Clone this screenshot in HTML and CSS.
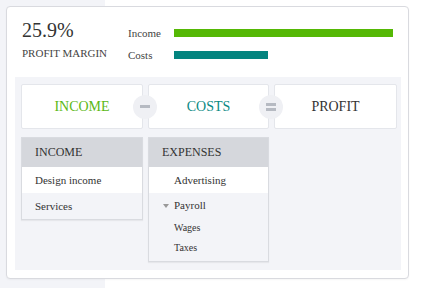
FILE: index.html
```html
<!DOCTYPE html>
<html lang="en">

<head>
    <meta charset="UTF-8">
    <meta name="viewport" content="width=device-width, initial-scale=1.0">
    <title>Profit</title>
    <link rel="stylesheet" href="styles.css">
</head>

<body>
    <div class="card">
        <div class="summary">
            <div class="margin">
                <div class="margin__value">25.9%</div>
                <div class="margin__label">PROFIT MARGIN</div>
            </div>
            <div class="bars">
                <div class="bars__row">
                    <span class="bars__label">Income</span>
                    <div class="bars__track"><div class="bars__fill bars__fill--income" style="width: 100%"></div></div>
                </div>
                <div class="bars__row">
                    <span class="bars__label">Costs</span>
                    <div class="bars__track"><div class="bars__fill bars__fill--costs" style="width: 43%"></div></div>
                </div>
            </div>
        </div>
        <div class="panel">
            <div class="equation">
                <div class="equation__box equation__box--income">INCOME</div>
                <div class="equation__op"><span class="bar"></span></div>
                <div class="equation__box equation__box--costs">COSTS</div>
                <div class="equation__op"><span class="bar"></span><span class="bar"></span></div>
                <div class="equation__box equation__box--profit">PROFIT</div>
            </div>
            <div class="lists">
                <div class="list">
                    <div class="list__head">INCOME</div>
                    <div class="list__row list__row--white">Design income</div>
                    <div class="list__row">Services</div>
                </div>
                <div class="list list--expenses">
                    <div class="list__head">EXPENSES</div>
                    <div class="list__row list__row--white list__row--indent">Advertising</div>
                    <div class="list__row list__row--group"><span class="caret"></span>Payroll</div>
                    <div class="list__row list__row--sub">Wages</div>
                    <div class="list__row list__row--sub">Taxes</div>
                </div>
            </div>
        </div>
    </div>
</body>

</html>
```

FILE: styles.css
```css
body {
    margin: 0;
    height: 288px;
    background: linear-gradient(to right, #f3f4f8 105px, #fff 105px);
    font-family: "Liberation Serif", Tinos, "DejaVu Serif", serif;
    color: #333;
}

.card {
    box-sizing: border-box;
    width: 403px;
    height: 273px;
    margin: 6px 0 0 6px;
    padding: 0 7px 8px 8px;
    background-color: #fff;
    border: 1px solid #d9dadf;
    border-radius: 4px;
    box-shadow: 0 1px 2px rgba(0, 0, 0, 0.04);
}

.summary {
    box-sizing: border-box;
    height: 70px;
    display: flex;
    padding: 12px 8px 0 7px;
}

.margin {
    width: 106px;
}

.margin__value {
    font-size: 20px;
    line-height: 22px;
}

.margin__label {
    margin-top: 5px;
    font-size: 11px;
    line-height: 14px;
    color: #444;
}

.bars {
    flex: 1;
    margin-top: 3px;
}

.bars__row {
    display: flex;
    align-items: center;
    height: 22px;
}

.bars__label {
    width: 46px;
    font-size: 11px;
    color: #444;
}

.bars__track {
    flex: 1;
    height: 8px;
}

.bars__fill {
    height: 100%;
}

.bars__fill--income {
    background-color: #55b805;
}

.bars__fill--costs {
    background-color: #04847f;
}

.panel {
    box-sizing: border-box;
    height: 193px;
    padding: 7px 4px 0 6px;
    background-color: #f3f4f8;
}

.equation {
    display: flex;
    align-items: center;
}

.equation__box {
    box-sizing: border-box;
    height: 45px;
    display: flex;
    align-items: center;
    justify-content: center;
    background-color: #fff;
    border: 1px solid #e4e6eb;
    border-radius: 2px;
    font-size: 14px;
}

.equation__box--income {
    width: 122px;
    color: #5cb815;
}

.equation__box--costs {
    width: 121px;
    color: #0b8a84;
}

.equation__box--profit {
    width: 123px;
    color: #333;
}

.equation__op {
    position: relative;
    z-index: 1;
    width: 24px;
    height: 24px;
    margin: 0 -9px 0 -10px;
    border-radius: 50%;
    background-color: #eff0f4;
    display: flex;
    flex-direction: column;
    align-items: center;
    justify-content: center;
    gap: 2px;
}

.bar {
    display: block;
    width: 10px;
    height: 3px;
    background-color: #b6bac2;
}

.lists {
    display: grid;
    grid-template-columns: 122px 121px 123px;
    column-gap: 5px;
    align-items: start;
    margin-top: 8px;
}

.list {
    border: 1px solid #d9dbe0;
    background-color: #f3f4f8;
    box-shadow: 0 1px 1px rgba(0, 0, 0, 0.05);
}

.list--expenses {
    padding-bottom: 3px;
}

.list__head {
    height: 29px;
    line-height: 29px;
    padding-left: 13px;
    background-color: #d5d7dc;
    font-size: 12px;
}

.list__row {
    height: 26px;
    line-height: 26px;
    padding-left: 13px;
    font-size: 11px;
}

.list__row--white {
    background-color: #fff;
}

.list__row--indent {
    padding-left: 25px;
}

.list__row--group {
    height: 25px;
    line-height: 25px;
    display: flex;
    align-items: center;
    padding-left: 14px;
}

.caret {
    width: 0;
    height: 0;
    margin-right: 5px;
    border-left: 3px solid transparent;
    border-right: 3px solid transparent;
    border-top: 4px solid #999;
}

.list__row--sub {
    height: 20px;
    line-height: 20px;
    padding-left: 25px;
    font-size: 10px;
}
```
